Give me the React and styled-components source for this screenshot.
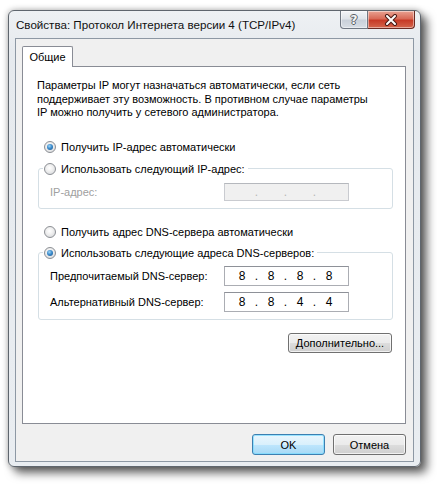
import React from "react";
import styled, { createGlobalStyle } from "styled-components";

const Global = createGlobalStyle`
  html, body { margin: 0; padding: 0; background: #ffffff; }
  body { font-family: "Liberation Sans", Arial, sans-serif; font-size: 11px; color: #000; }
  * { box-sizing: border-box; }
`;

const Page = styled.div`
  padding: 10px 0 0 8px;
  width: 437px;
  height: 488px;
  overflow: hidden;
`;

const Window = styled.div`
  width: 413px;
  height: 457px;
  border: 1px solid #5f666e;
  border-radius: 6px;
  background: linear-gradient(to bottom, #eef1f4 0px, #e6eaee 40px, #e9edf1 100%);
  box-shadow: 6px 6px 10px rgba(0, 0, 0, 0.6), 0 0 6px rgba(0, 0, 0, 0.3);
  display: flex;
  flex-direction: column;
`;

const TitleBar = styled.div`
  height: 27px;
  display: flex;
  justify-content: space-between;
  align-items: flex-start;
  padding-left: 7px;
  padding-right: 5px;
`;

const Title = styled.div`
  font-family: "Liberation Sans", Arial, sans-serif;
  font-size: 11.6px;
  line-height: 27px;
  color: #111;
  white-space: nowrap;
`;

const CaptionButtons = styled.div`
  display: flex;
  height: 18px;
`;

const CaptionButton = styled.div`
  width: ${(p) => p.$w}px;
  height: 18px;
  display: flex;
  align-items: center;
  justify-content: center;
  border: 1px solid ${(p) => (p.$close ? "#6b2a22" : "#6f7782")};
  border-top: none;
  border-left-width: ${(p) => (p.$close ? 0 : 1)}px;
  border-radius: ${(p) => (p.$close ? "0 0 4px 0" : "0 0 0 4px")};
  background: ${(p) =>
    p.$close
      ? "linear-gradient(to bottom, #e9a292 0%, #d86a57 45%, #c73a26 55%, #d4664c 100%)"
      : "linear-gradient(to bottom, #f3f5f8 0%, #dfe4ea 45%, #c9d0d9 55%, #d8dee5 100%)"};
  box-shadow: inset 0 0 0 1px rgba(255, 255, 255, 0.45);
`;

const HelpGlyph = styled.span`
  font-family: "DejaVu Sans", sans-serif;
  font-weight: bold;
  font-size: 12px;
  line-height: 12px;
  color: #f4f4f4;
  text-shadow: -1px 0 #5a5f66, 1px 0 #5a5f66, 0 -1px #5a5f66, 0 1px #5a5f66;
`;

const Client = styled.div`
  margin: 0 6px 4px 6px;
  height: 424px;
  border: 1px solid #8d98a4;
  background: #f0f0f0;
  padding: 7px 7px 0 6px;
  display: flex;
  flex-direction: column;
`;

const TabStrip = styled.div`
  height: 20px;
  display: flex;
  align-items: flex-end;
`;

const Tab = styled.div`
  position: relative;
  z-index: 1;
  width: 51px;
  height: 21px;
  margin-bottom: -1px;
  border: 1px solid #898c95;
  border-bottom: none;
  border-radius: 2px 2px 0 0;
  background: #ffffff;
  display: flex;
  align-items: center;
  justify-content: center;
  padding-bottom: 1px;
`;

const Panel = styled.div`
  height: 358px;
  border: 1px solid #898c95;
  background: #ffffff;
  padding: 12px 12px 0 14px;
  display: flex;
  flex-direction: column;
`;

const Paragraph = styled.p`
  margin: 0;
  line-height: 13.5px;
`;

const RadioRow = styled.label`
  display: flex;
  align-items: center;
  gap: 5px;
  height: 16px;
  margin-top: ${(p) => p.$mt || 0}px;
  margin-left: ${(p) => (p.$inLegend ? 0 : 7)}px;
  white-space: nowrap;
`;

const RadioCircle = styled.span`
  width: 12px;
  height: 12px;
  border-radius: 50%;
  border: 1px solid #8c8f94;
  background: radial-gradient(circle at 45% 40%, #ffffff 0%, #f0f0f0 40%, #cfd2d6 100%);
  display: flex;
  align-items: center;
  justify-content: center;
  flex: none;
  &::after {
    content: "";
    display: ${(p) => (p.$checked ? "block" : "none")};
    width: 6px;
    height: 6px;
    border-radius: 50%;
    background: radial-gradient(circle at 40% 35%, #9fd6f7 0%, #3d8ccc 45%, #134f8a 100%);
  }
`;

const Group = styled.fieldset`
  margin: ${(p) => p.$mt}px 0 0 1px;
  min-width: 0;
  border: 1px solid #d5dfe5;
  border-radius: 3px;
  padding: 0 7px 7px 4px;
`;

const Legend = styled.legend`
  padding: 0 3px 0 1px;
`;

const FieldRow = styled.div`
  display: flex;
  align-items: center;
  margin-top: ${(p) => p.$mt}px;
  padding-left: 7px;
  height: ${(p) => p.$h}px;
`;

const FieldLabel = styled.span`
  width: 174px;
  color: ${(p) => (p.$disabled ? "#a0a0a0" : "#000")};
  white-space: nowrap;
`;

const IpField = styled.div`
  width: 125px;
  height: 100%;
  border: 1px solid ${(p) => (p.$disabled ? "#c9cbd0" : "#abadb3")};
  border-top-color: ${(p) => (p.$disabled ? "#b5b8bd" : "#8e9198")};
  background: ${(p) => (p.$disabled ? "#f0f0f0" : "#ffffff")};
  display: flex;
  align-items: center;
  padding-left: 5px;
  font-size: 12px;
  color: ${(p) => (p.$disabled ? "#b8b8b8" : "#000")};
`;

const Octet = styled.span`
  width: 24px;
  text-align: center;
`;

const Dot = styled.span`
  width: 5px;
  text-align: center;
`;

const RightRow = styled.div`
  display: flex;
  justify-content: flex-end;
  margin-top: ${(p) => p.$mt}px;
  margin-right: ${(p) => p.$mr || 0}px;
  gap: 8px;
`;

const Button = styled.button`
  font-family: "Liberation Sans", Arial, sans-serif;
  font-size: 11px;
  color: #000;
  width: ${(p) => p.$w}px;
  height: ${(p) => p.$h}px;
  padding: 0;
  border-radius: 3px;
  border: 1px solid ${(p) => (p.$default ? "#3c7fb1" : "#707070")};
  background: ${(p) =>
    p.$default
      ? "linear-gradient(to bottom, #eaf6fd 0%, #d9f0fc 50%, #bee6fd 51%, #a7d9f5 100%)"
      : "linear-gradient(to bottom, #f2f2f2 0%, #ebebeb 50%, #dddddd 51%, #cfcfcf 100%)"};
  box-shadow: inset 0 0 0 1px ${(p) => (p.$default ? "rgba(120,220,255,0.7)" : "rgba(255,255,255,0.7)")};
`;

const Ip = ({ octets, disabled }) => (
  <IpField $disabled={disabled}>
    <Octet>{octets[0]}</Octet>
    <Dot>.</Dot>
    <Octet>{octets[1]}</Octet>
    <Dot>.</Dot>
    <Octet>{octets[2]}</Octet>
    <Dot>.</Dot>
    <Octet>{octets[3]}</Octet>
  </IpField>
);

const Radio = ({ checked, children, mt, inLegend }) => (
  <RadioRow $mt={mt} $inLegend={inLegend}>
    <RadioCircle $checked={checked} />
    <span>{children}</span>
  </RadioRow>
);

export default function App() {
  return (
    <>
      <Global />
      <Page>
        <Window>
          <TitleBar>
            <Title>Свойства: Протокол Интернета версии 4 (TCP/IPv4)</Title>
            <CaptionButtons>
              <CaptionButton $w={28}>
                <HelpGlyph>?</HelpGlyph>
              </CaptionButton>
              <CaptionButton $w={47} $close>
                <svg width="14" height="12" viewBox="0 0 14 12">
                  <path d="M3 2 L11 10 M11 2 L3 10" stroke="#4a1a14" strokeWidth="4" strokeLinecap="round" />
                  <path d="M3 2 L11 10 M11 2 L3 10" stroke="#ffffff" strokeWidth="2" strokeLinecap="round" />
                </svg>
              </CaptionButton>
            </CaptionButtons>
          </TitleBar>
          <Client>
            <TabStrip>
              <Tab>Общие</Tab>
            </TabStrip>
            <Panel>
              <Paragraph>
                Параметры IP могут назначаться автоматически, если сеть
                <br />
                поддерживает эту возможность. В противном случае параметры
                <br />
                IP можно получить у сетевого администратора.
              </Paragraph>
              <Radio checked mt={19}>Получить IP-адрес автоматически</Radio>
              <Group $mt={6}>
                <Legend>
                  <Radio inLegend>Использовать следующий IP-адрес:</Radio>
                </Legend>
                <FieldRow $mt={6} $h={18}>
                  <FieldLabel $disabled>IP-адрес:</FieldLabel>
                  <Ip octets={["", "", "", ""]} disabled />
                </FieldRow>
              </Group>
              <Radio mt={15}>Получить адрес DNS-сервера автоматически</Radio>
              <Group $mt={5}>
                <Legend>
                  <Radio checked inLegend>Использовать следующие адреса DNS-серверов:</Radio>
                </Legend>
                <FieldRow $mt={5} $h={20}>
                  <FieldLabel>Предпочитаемый DNS-сервер:</FieldLabel>
                  <Ip octets={["8", "8", "8", "8"]} />
                </FieldRow>
                <FieldRow $mt={6} $h={20}>
                  <FieldLabel>Альтернативный DNS-сервер:</FieldLabel>
                  <Ip octets={["8", "8", "4", "4"]} />
                </FieldRow>
              </Group>
              <RightRow $mt={13} $mr={1}>
                <Button $w={104} $h={20}>Дополнительно...</Button>
              </RightRow>
            </Panel>
            <RightRow $mt={10}>
              <Button $w={73} $h={21} $default>OK</Button>
              <Button $w={73} $h={21}>Отмена</Button>
            </RightRow>
          </Client>
        </Window>
      </Page>
    </>
  );
}
